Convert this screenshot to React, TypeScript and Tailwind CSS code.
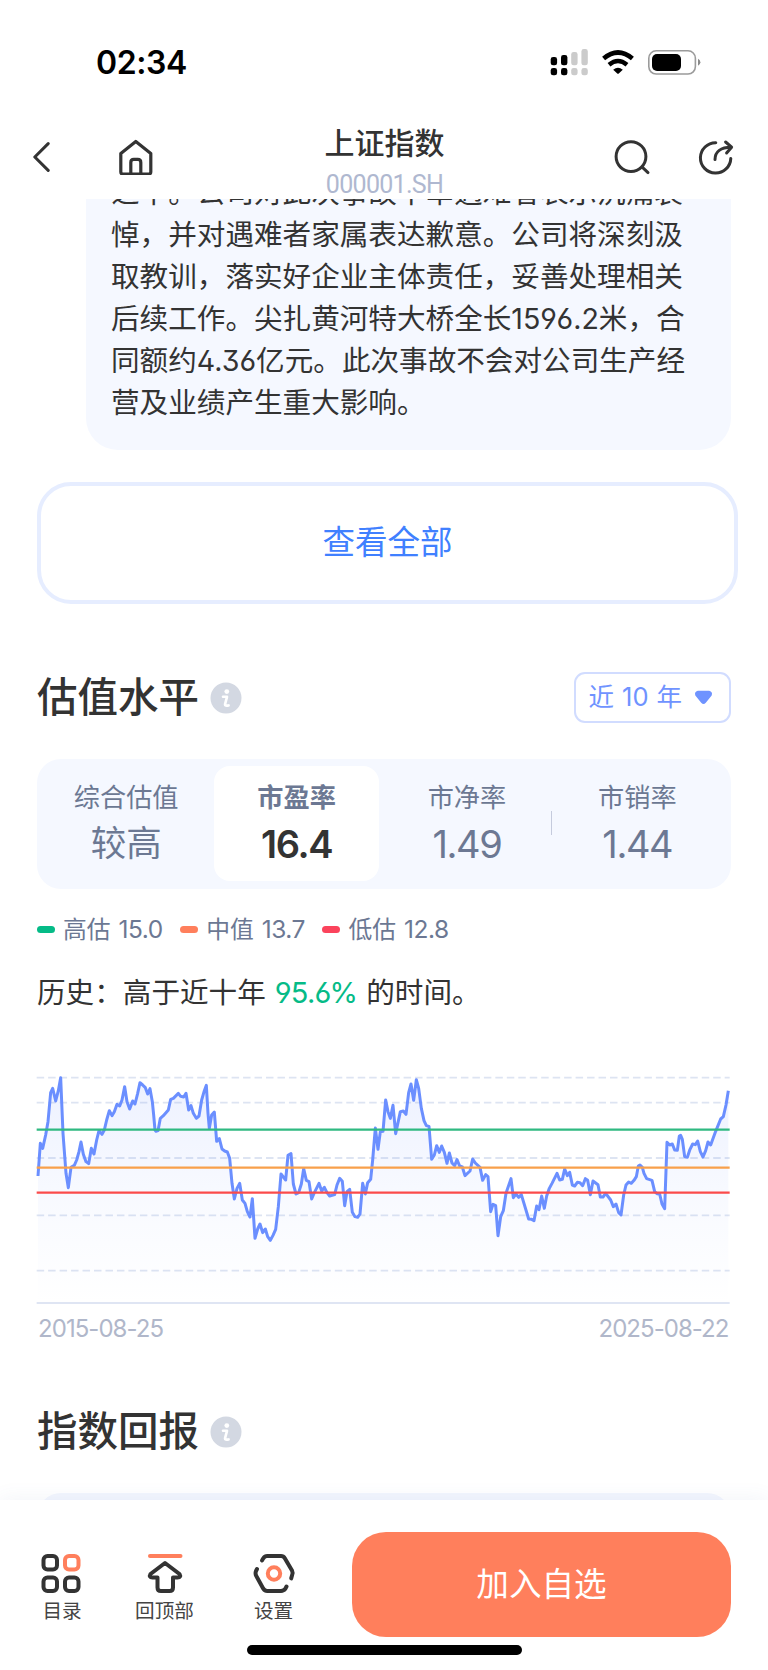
import type { ReactNode } from "react";

const points: [number, number][] = [
    [54, 348], [61, 250], [68, 265], [77, 225], [84, 185], [92, 98], [98, 85], [107, 123], [115, 92], [122, 53],
    [129, 220], [138, 340], [145, 383], [153, 322], [163, 316], [170, 300], [177, 275], [183, 246], [190, 283], [198, 305],
    [206, 311], [214, 265], [222, 282], [230, 240], [237, 212], [246, 223], [253, 210], [260, 180], [268, 152], [276, 167],
    [283, 155], [291, 133], [299, 138], [306, 120], [314, 80], [321, 125], [329, 147], [338, 123], [345, 132], [353, 100],
    [360, 68], [368, 75], [376, 83], [383, 102], [390, 86], [397, 125], [401, 165], [405, 210], [408, 214], [414, 212],
    [421, 175], [430, 167], [445, 150], [452, 118], [460, 115], [475, 100], [482, 109], [491, 111], [498, 100], [506, 150],
    [513, 137], [520, 160], [529, 175], [537, 168], [545, 120], [553, 92], [559, 76], [564, 160], [568, 205], [575, 165],
    [583, 156], [590, 244], [598, 236], [606, 267], [614, 273], [622, 276], [629, 295], [636, 370], [643, 417], [651, 385],
    [659, 370], [667, 420], [675, 430], [682, 455], [690, 471], [697, 416], [701, 475], [705, 535], [713, 507], [720, 492],
    [728, 518], [736, 507], [743, 530], [751, 541], [759, 526], [767, 508], [775, 440], [783, 342], [797, 360], [804, 286],
    [813, 281], [820, 372], [828, 402], [836, 398], [844, 372], [851, 326], [859, 361], [867, 365], [875, 417], [882, 400],
    [897, 370], [905, 393], [913, 382], [921, 398], [929, 408], [944, 404], [951, 375], [959, 355], [967, 364], [974, 437],
    [981, 395], [989, 388], [997, 457], [1005, 470], [1013, 472], [1020, 462], [1028, 370], [1036, 402], [1043, 368], [1052, 358],
    [1058, 300], [1066, 204], [1074, 268], [1081, 215], [1089, 214], [1097, 120], [1104, 155], [1111, 175], [1119, 136], [1127, 221],
    [1141, 155], [1150, 153], [1158, 163], [1166, 98], [1173, 72], [1181, 121], [1189, 59], [1196, 85], [1204, 145], [1212, 182],
    [1219, 197], [1227, 199], [1235, 298], [1243, 285], [1250, 257], [1258, 277], [1265, 258], [1273, 277], [1281, 310], [1288, 279],
    [1296, 309], [1304, 317], [1311, 299], [1319, 318], [1327, 321], [1335, 347], [1350, 333], [1358, 297], [1366, 309], [1380, 322],
    [1388, 361], [1397, 344], [1404, 350], [1412, 455], [1419, 433], [1427, 437], [1434, 527], [1442, 470], [1450, 452], [1458, 400],
    [1473, 356], [1480, 413], [1488, 402], [1496, 412], [1504, 404], [1526, 477], [1535, 478], [1542, 482], [1550, 438], [1557, 449],
    [1565, 408], [1573, 445], [1580, 408], [1588, 385], [1596, 370], [1611, 340], [1619, 360], [1627, 358], [1634, 327], [1642, 347],
    [1649, 337], [1657, 375], [1664, 378], [1672, 367], [1680, 368], [1688, 377], [1696, 356], [1703, 361], [1711, 404], [1719, 363],
    [1734, 374], [1741, 411], [1749, 411], [1757, 400], [1772, 420], [1780, 440], [1788, 432], [1796, 458], [1803, 465], [1811, 405],
    [1818, 375], [1826, 366], [1834, 370], [1842, 361], [1849, 350], [1855, 318], [1860, 315], [1867, 322], [1872, 340], [1880, 356],
    [1896, 361], [1904, 395], [1911, 401], [1919, 402], [1926, 432], [1934, 446], [1941, 247], [1949, 255], [1957, 252], [1964, 270],
    [1972, 271], [1978, 228], [1982, 226], [1987, 238], [1994, 290], [2002, 292], [2010, 268], [2018, 252], [2026, 254], [2033, 243],
    [2041, 275], [2049, 291], [2057, 272], [2064, 246], [2072, 255], [2087, 214], [2102, 177], [2110, 170], [2118, 135], [2125, 92],
];

const gridLines = [53, 128, 294, 466, 632];

const newsLines = [
    "悼，并对遇难者家属表达歉意。公司将深刻汲",
    "取教训，落实好企业主体责任，妥善处理相关",
    "后续工作。尖扎黄河特大桥全长1596.2米，合",
    "同额约4.36亿元。此次事故不会对公司生产经",
    "营及业绩产生重大影响。",
];

const tabs = [
    { label: "综合估值", value: "较高" },
    { label: "市盈率", value: "16.4", active: true },
    { label: "市净率", value: "1.49" },
    { label: "市销率", value: "1.44", divider: true },
];

const legends = [
    { label: "高估", value: "15.0", color: "bg-[#05bb87]" },
    { label: "中值", value: "13.7", color: "bg-[#ff7f5c]" },
    { label: "低估", value: "12.8", color: "bg-[#fb435c]" },
];

function StatusIcons() {
    return (
        <svg className="h-7 w-[152px]" viewBox="550 48 152 28" fill="none">
            <g fill="#000">
                <rect x="550.7" y="57" width="6.4" height="8.3" rx="2.4" />
                <rect x="561" y="55" width="6.4" height="10.3" rx="2.4" />
                <rect x="550.7" y="68" width="6.4" height="7.3" rx="2.4" />
                <rect x="561" y="68" width="6.4" height="7.3" rx="2.4" />
            </g>
            <g fill="#cbcbcb">
                <rect x="571.2" y="52" width="6.4" height="13.3" rx="2.4" />
                <rect x="581.4" y="49" width="6.4" height="16.3" rx="2.4" />
                <rect x="571.2" y="68" width="6.4" height="7.3" rx="2.4" />
                <rect x="581.4" y="68" width="6.4" height="7.3" rx="2.4" />
            </g>
            <path d="M603.6 58.6Q618 46.4 632.4 58.6" stroke="#000" strokeWidth="4.6" />
            <path d="M609 64.8Q618 57.4 627 64.8" stroke="#000" strokeWidth="4.4" />
            <path d="M613.2 69.7Q618 66 622.8 69.7L618.8 73.4Q618 74 617.2 73.4Z" fill="#000" />
            <rect x="648.8" y="50.8" width="46.6" height="23.2" rx="7.4" stroke="#9b9b9b" strokeWidth="1.6" />
            <rect x="652" y="54" width="29" height="17" rx="5" fill="#000" />
            <path d="M698 58.8Q700.4 60 700.4 62.3T698 65.8Z" fill="#8a8a8a" />
        </svg>
    );
}

function NavBar() {
    return (
        <div className="grid grid-cols-[1fr_auto_1fr] pt-[7px] pr-8 pl-[33px] text-[#333]">
            <div className="flex items-start gap-[68px] pt-4">
                <svg className="h-9 w-[18px]" viewBox="0 0 18 36" fill="none" stroke="currentColor" strokeWidth="3" strokeLinecap="round" strokeLinejoin="round">
                    <path d="M15.2 4.6L1.8 18L15.2 31.4" />
                </svg>
                <svg className="h-9 w-9" viewBox="0 0 36 36" fill="none" stroke="currentColor" strokeWidth="3.2" strokeLinejoin="round">
                    <path d="M1.8 14.4L16.8 2.4L31.8 14.4V33Q31.8 35 29.8 35H3.8Q1.8 35 1.8 33Z" />
                    <path d="M11.8 34.5V23.4Q11.8 20.4 14.8 20.4H18.8Q21.8 20.4 21.8 23.4V34.5" />
                </svg>
            </div>
            <div className="flex flex-col items-center">
                <div className="text-[30px] leading-10 font-medium">上证指数</div>
                <div className="mt-[7px] font-[Roboto] text-[25px] leading-[30px] tracking-[-0.7px] text-[#afb8d0]">000001.SH</div>
            </div>
            <div className="flex items-start justify-end pt-[15px]">
                <svg className="h-10 w-[122px]" viewBox="614 137 122 40" fill="none" stroke="currentColor" strokeWidth="3" strokeLinecap="round" strokeLinejoin="round">
                    <circle cx="631" cy="155.6" r="14.9" />
                    <path d="M642.2 166.2L648 171.6" />
                    <path d="M715.8 141.7A15.2 15.2 0 1 0 730.8 157.4" />
                    <path d="M715 158.6C715 150.6 721 146.3 731 146.3M725.6 141L731.6 146.2L726.6 152" />
                </svg>
            </div>
        </div>
    );
}

function SectionTitle({ title, children }: { title: string; children?: ReactNode }) {
    return (
        <div className="flex h-[52px] items-center">
            <h2 className="pt-0.5 text-[40.5px] leading-[52px] font-medium text-[#333]">{title}</h2>
            <svg className="mt-0.5 ml-[11px] h-8 w-8" viewBox="0 0 32 32">
                <circle cx="16" cy="16" r="15.5" fill="#d3d8e2" />
                <circle cx="16.8" cy="9.6" r="2.4" fill="#fff" />
                <path d="M13 14.8H17L15 22.4Q14.8 24.2 18.6 23.4" fill="none" stroke="#fff" strokeWidth="2.6" strokeLinecap="round" strokeLinejoin="round" />
            </svg>
            {children}
        </div>
    );
}

function ValuationChart() {
    const line = points.map((p) => p.join(",")).join(" ");
    return (
        <svg className="ml-[-1px] h-[233px] w-[696px]" viewBox="48 39 2088 699" fill="none">
            <defs>
                <linearGradient id="area" x1="0" y1="53" x2="0" y2="730" gradientUnits="userSpaceOnUse">
                    <stop offset="0" stopColor="#6b8fff" stopOpacity="0.12" />
                    <stop offset="0.55" stopColor="#6b8fff" stopOpacity="0.045" />
                    <stop offset="1" stopColor="#6b8fff" stopOpacity="0" />
                </linearGradient>
            </defs>
            {gridLines.map((y) => (
                <path key={y} d={`M50 ${y}H2129`} stroke="#dde4f2" strokeWidth="5.5" strokeDasharray="22.5 11.9" />
            ))}
            <path d="M50 729H2129" stroke="#dfe5f3" strokeWidth="6" />
            <polygon points={`54,729 ${line} 2125,729`} fill="url(#area)" />
            <polyline points={line} stroke="#6b8fff" strokeWidth="9" strokeLinejoin="round" />
            <path d="M50 209H2129" stroke="#2fb981" strokeWidth="6.5" />
            <path d="M50 323H2129" stroke="#f8a04b" strokeWidth="6.5" />
            <path d="M50 398H2129" stroke="#fb4b4b" strokeWidth="6.5" />
        </svg>
    );
}

function FooterItem({ label, children }: { label: string; children: ReactNode }) {
    return (
        <div className="flex w-[60px] flex-col items-center">
            <svg className="h-[42px] w-[44px]" viewBox="0 0 44 42" fill="none" stroke="#333" strokeWidth="4" strokeLinecap="round" strokeLinejoin="round">
                {children}
            </svg>
            <span className="mt-[3px] text-[19.6px] leading-7 whitespace-nowrap text-[#444]">{label}</span>
        </div>
    );
}

export default function App() {
    return (
        <div className="flex h-[1670px] w-[768px] flex-col overflow-hidden bg-white font-['Inter','Noto_Sans_CJK_SC',sans-serif] text-[#333]">
            <header className="h-[199px] shrink-0">
                <div className="flex h-[116px] items-start justify-between pt-12 pr-[66px] pl-[96px]">
                    <div className="pt-px text-[32px] leading-7 font-semibold tracking-[-0.4px] text-black">02:34</div>
                    <StatusIcons />
                </div>
                <NavBar />
            </header>

            <main className="min-h-0 flex-1 overflow-hidden pr-[37.5px] pl-[37px]">
                <div className="ml-[49px] h-[251px] overflow-hidden rounded-b-[32px] bg-[#f5f8ff] pl-[25px] text-[28.6px] leading-[42.1px] [font-feature-settings:'ss01']">
                    <div className="-mt-[27px] whitespace-nowrap">之中。公司对此次事故不幸遇难者表示沉痛哀</div>
                    {newsLines.map((line) => (
                        <div key={line} className="whitespace-nowrap">{line}</div>
                    ))}
                </div>

                <button className="mt-8 flex h-[122px] w-[701px] items-center justify-center rounded-[34px] border-4 border-[#e6edff] text-[32.5px] text-[#4080ff]">
                    查看全部
                </button>

                <section className="pt-[67px]">
                    <SectionTitle title="估值水平">
                        <button className="mt-px ml-auto flex h-[51px] w-[157px] items-center rounded-[11px] border-2 border-[#d1dcff] pl-[13px] text-[25.5px] whitespace-nowrap text-[#6f93ff]">
                            近<span className="mx-2">10</span>年
                            <svg className="ml-3 h-[17px] w-[19px]" viewBox="0 0 20 16">
                                <path d="M4 1H16Q20 2 18.6 6L12.4 13.4Q10 16.4 7.6 13.4L1.4 6Q0 2 4 1Z" fill="currentColor" />
                            </svg>
                        </button>
                    </SectionTitle>

                    <div className="mt-[35.5px] grid h-[130px] grid-cols-4 rounded-[24px] bg-[#f5f8ff] pt-[7px] pr-[8px] pb-2 pl-[4px] text-[#6c7893]">
                        {tabs.map((tab) => (
                            <div
                                key={tab.label}
                                className={`relative mx-[2.5px] flex flex-col items-center rounded-2xl pt-[14px] ${tab.active ? "bg-white" : ""}`}
                            >
                                {tab.divider && <span className="absolute top-[45px] -left-[4px] h-6 w-[1.5px] bg-[#c5cbdd]" />}
                                <span className={`text-[26.2px] leading-9 ${tab.active ? "font-bold" : ""}`}>{tab.label}</span>
                                <span
                                    className={`mt-[4px] leading-[48px] ${tab.value === "较高" ? "text-[35.5px]" : "text-[38px] tracking-[-1.4px]"} ${tab.active ? "font-semibold text-[#333]" : ""}`}
                                >
                                    {tab.value}
                                </span>
                            </div>
                        ))}
                    </div>

                    <div className="mt-[23px] flex h-9 items-center text-[23.8px] text-[#6c7893]">
                        {legends.map((item) => (
                            <div key={item.label} className="mr-[17.5px] flex items-center">
                                <span className={`mr-2 h-[7px] w-[18px] rounded-full ${item.color}`} />
                                {item.label}
                                <span className="ml-2 text-[24.5px] tracking-[-0.5px]">{item.value}</span>
                            </div>
                        ))}
                    </div>

                    <div className="mt-[25px] text-[28.6px] leading-10 whitespace-nowrap [font-feature-settings:'ss01']">
                        历史：高于近十年<span className="mx-[9px] text-[29px] tracking-[-0.8px] text-[#05bb87]">95.6%</span>的时间。
                    </div>

                    <div className="mt-[60px]">
                        <ValuationChart />
                        <div className="mt-[5px] flex justify-between pr-[2px] pl-[1px] text-[24px] leading-9 tracking-[-0.95px] text-[#b0b7ca]">
                            <span>2015-08-25</span>
                            <span>2025-08-22</span>
                        </div>
                    </div>
                </section>

                <section className="pt-[58px]">
                    <SectionTitle title="指数回报" />
                    <div className="mt-[36px] h-32 rounded-[24px] bg-[#f3f6fe]" />
                </section>
            </main>

            <footer className="relative h-[170px] shrink-0 bg-white pt-8 shadow-[0_0_20px_rgba(80,100,160,0.08)]">
                <div className="flex pl-8">
                    <div className="flex pt-5">
                        <FooterItem label="目录">
                            <rect x="3.5" y="4" width="13.5" height="13.5" rx="4" />
                            <rect x="25" y="4" width="13.5" height="13.5" rx="4" stroke="#ff7f5c" />
                            <rect x="3.5" y="25.5" width="13.5" height="13.5" rx="4" />
                            <rect x="25" y="25.5" width="13.5" height="13.5" rx="4" />
                        </FooterItem>
                        <div className="w-[42.5px]" />
                        <FooterItem label="回顶部">
                            <path d="M7 4H37.5" stroke="#ff7f5c" />
                            <path d="M22 11L36.5 22Q38.5 25.5 34.5 25.5H30V35.5Q30 39 26.5 39H18Q14.5 39 14.5 35.5V25.5H9.5Q5.5 25.5 7.5 22Z" />
                        </FooterItem>
                        <div className="w-[49px]" />
                        <FooterItem label="设置">
                            <path d="M10 8.5L11.3 6.3Q12.8 4 15.2 4H29Q31.5 4 32.8 6.3L40 18.5Q41.3 21 40 23.5L39.2 26.4" />
                            <path d="M34.5 34.5L33.4 36.7Q31.8 39 29 39H15.2Q12.8 39 11.3 36.7L4.3 24Q3 21.5 4 19L5 17" />
                            <circle cx="22" cy="21.5" r="6.2" stroke="#ff7f5c" />
                        </FooterItem>
                    </div>
                    <button className="ml-[48.5px] h-[105px] w-[379px] rounded-[34px] bg-[#ff7f5c] text-[32.6px] text-white">
                        加入自选
                    </button>
                </div>
                <div className="mt-[7.5px] ml-[246.5px] h-[10px] w-[275px] rounded-full bg-black" />
            </footer>
        </div>
    );
}
